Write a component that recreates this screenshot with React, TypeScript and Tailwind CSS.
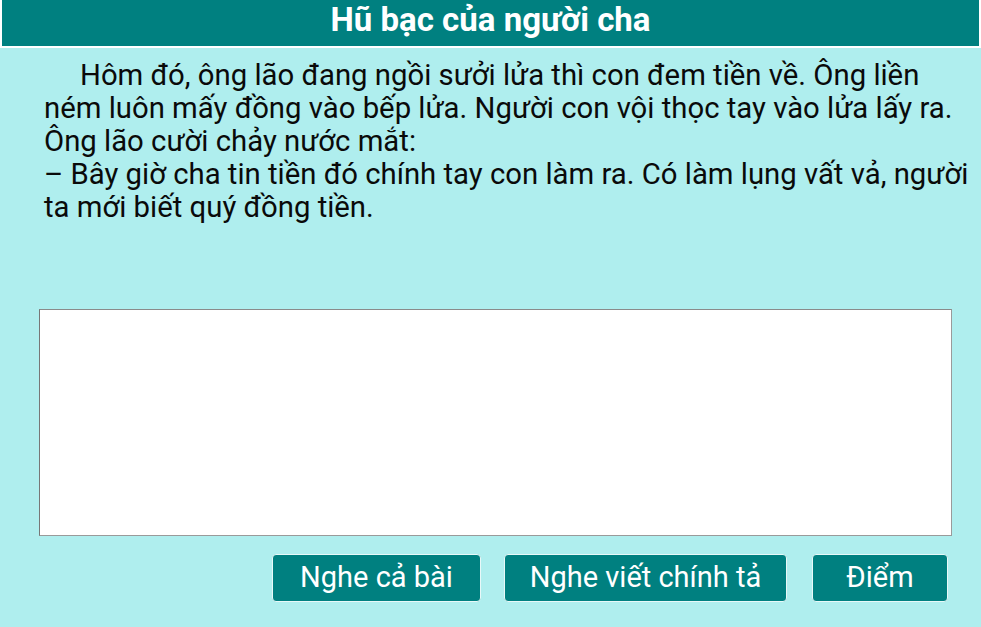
export default function App() {
  return (
    <div className="w-[981px] h-[627px] bg-[#afeeee] font-['Roboto',sans-serif] overflow-hidden flex flex-col">
      <div className="h-[48px] bg-[#008080] border-x-2 border-b-2 border-white flex items-center justify-center pb-[8px]">
        <h1 className="text-[33px] font-bold text-white leading-none">Hũ bạc của người cha</h1>
      </div>

      <div className="pl-[44px] pr-[10px] pt-[11px] text-[29.3px] leading-[33px] text-[#0a0a0a]">
        <p className="indent-[36px]">
          Hôm đó, ông lão đang ngồi sưởi lửa thì con đem tiền về. Ông liền ném luôn mấy đồng vào bếp lửa. Người con vội thọc tay vào lửa lấy ra.
        </p>
        <p>Ông lão cười chảy nước mắt:</p>
        <p>– Bây giờ cha tin tiền đó chính tay con làm ra. Có làm lụng vất vả, người ta mới biết quý đồng tiền.</p>
      </div>

      <div className="mt-[85px] ml-[39px] w-[913px] h-[227px] bg-white border border-[#9a9a9a] border-l-[#777] border-t-[#8a8a8a]">
        <textarea className="w-full h-full resize-none outline-none bg-transparent p-2 text-[20px]" />
      </div>

      <div className="mt-[18px] flex justify-end pr-[33px]">
        <button className="w-[209px] h-[48px] rounded-[4px] bg-[#008080] border border-[#e8f8f8] text-white text-[29px]">
          Nghe cả bài
        </button>
        <button className="ml-[23px] w-[283px] h-[48px] rounded-[4px] bg-[#008080] border border-[#e8f8f8] text-white text-[29px]">
          Nghe viết chính tả
        </button>
        <button className="ml-[25px] w-[136px] h-[48px] rounded-[4px] bg-[#008080] border border-[#e8f8f8] text-white text-[29px]">
          Điểm
        </button>
      </div>
    </div>
  );
}
